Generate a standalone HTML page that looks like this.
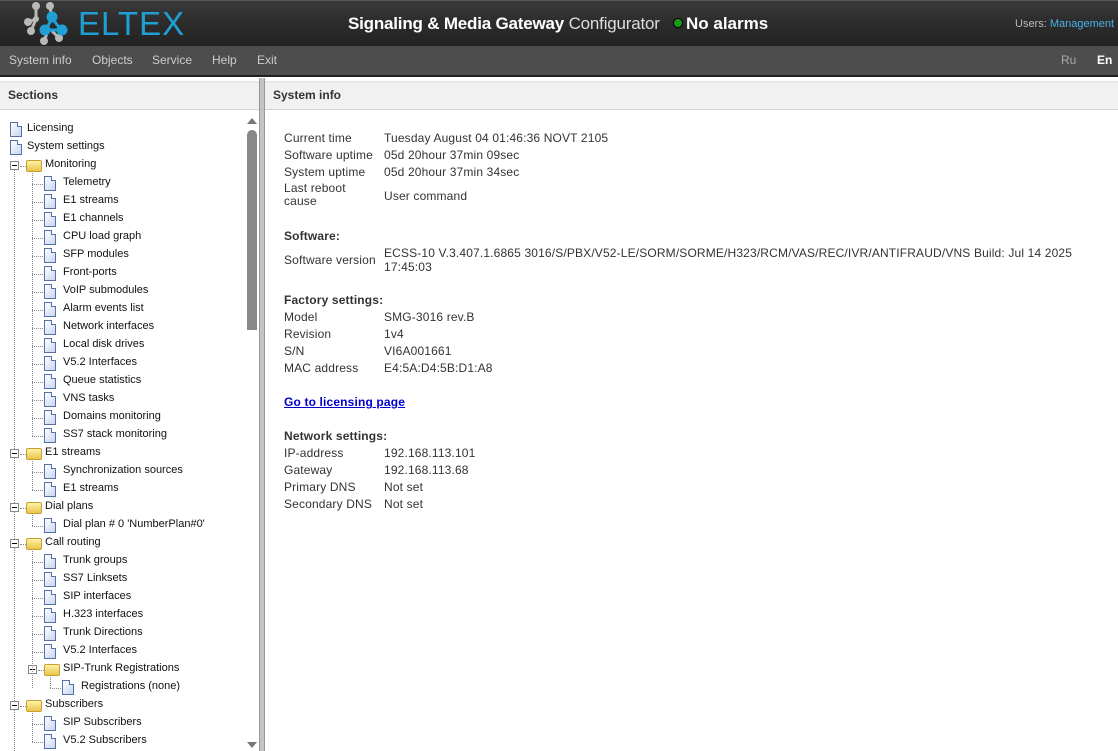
<!DOCTYPE html>
<html><head><meta charset="utf-8"><style>
*{margin:0;padding:0;box-sizing:border-box}
body{width:1118px;height:751px;overflow:hidden;background:#fff;font-family:"Liberation Sans",Tahoma,sans-serif;position:relative}
.hdr{position:absolute;left:0;top:0;width:1118px;height:46px;background:linear-gradient(#3a3a3a,#2e2e2e 40%,#222);border-top:1px solid #555}
.menu{position:absolute;left:0;top:46px;width:1118px;height:31px;background:#4d4d4d;border-bottom:2px solid #222}
.menu span{position:absolute;top:7px;font-size:12px;color:#ccc}
.ph{position:absolute;top:81px;height:29px;background:#f1f1f1;border-top:2px solid #e8e8e8;border-bottom:1px solid #d4d4d4;font-size:12px;font-weight:bold;color:#333;padding:5px 0 0 8px}
.split{position:absolute;left:259px;top:78px;width:6px;height:673px;background:#c4c4c4;border-left:1px solid #999;border-right:1px solid #999}
.t{position:absolute;font-size:11px;color:#111;white-space:nowrap}
.doc{position:absolute;width:12px;height:15px;border:1px solid #5570a8;background:linear-gradient(135deg,#fff,#c8d6f0)}
.doc:after{content:"";position:absolute;right:-1px;top:-1px;width:4px;height:4px;background:#fff;border-left:1px solid #5570a8;border-bottom:1px solid #5570a8}
.fold{position:absolute;width:16px;height:12px;background:linear-gradient(#fff2a8,#e9c44a);border:1px solid #c9a030;border-radius:2px}
.tog{position:absolute;width:9px;height:9px;border:1px solid #888;background:#fff}
.tog:after{content:"";position:absolute;left:1px;top:3px;width:5px;height:1px;background:#000}
.hl{position:absolute;border-top:1px dotted #888;height:1px}
.vl{position:absolute;border-left:1px dotted #888;width:1px}
.r{position:absolute;font-size:12px;color:#333;white-space:nowrap;letter-spacing:0.15px}
.b{font-weight:bold}
</style></head><body>
<div class="hdr">
<svg style="position:absolute;left:22px;top:0" width="60" height="46" viewBox="0 0 60 46">
<g fill="#b9b9b9"><circle cx="14" cy="5" r="4"/><circle cx="6" cy="21" r="4"/><circle cx="9" cy="30" r="4"/><circle cx="28" cy="5" r="4"/><circle cx="37" cy="37" r="4"/><circle cx="22" cy="40" r="4"/><circle cx="14" cy="18" r="3"/></g>
<g stroke="#b9b9b9" stroke-width="3"><line x1="14" y1="5" x2="14" y2="18"/><line x1="6" y1="21" x2="14" y2="18"/><line x1="9" y1="30" x2="14" y2="18"/><line x1="28" y1="5" x2="30" y2="18"/><line x1="37" y1="37" x2="30" y2="30"/><line x1="22" y1="40" x2="26" y2="30"/></g>
<g stroke="#1ea0d4" stroke-width="3" fill="#1ea0d4"><line x1="30" y1="17" x2="24" y2="29"/><line x1="24" y1="29" x2="39" y2="29"/><line x1="30" y1="17" x2="39" y2="29"/><circle cx="30" cy="16" r="4"/><circle cx="23" cy="29" r="4"/><circle cx="40" cy="29" r="4"/></g>
</svg>
<div style="position:absolute;left:78px;top:4px;font-size:33px;color:#1ea0d4;letter-spacing:1px;font-family:'Liberation Sans',sans-serif">ELTEX</div>
<div style="position:absolute;left:348px;top:13px;font-size:17px;color:#fff;white-space:nowrap;letter-spacing:-0.2px"><b>Signaling &amp; Media Gateway</b> <span style="color:#ddd">Configurator</span></div>
<div style="position:absolute;left:673px;top:17px;width:10px;height:10px;border-radius:50%;background:#1a9a1a;border:1px solid #000"></div>
<div style="position:absolute;left:686px;top:13px;font-size:17px;color:#fff;font-weight:bold">No alarms</div>
<div style="position:absolute;left:1015px;top:17px;font-size:11px;color:#bbb">Users: <span style="color:#4ab0e8">Management</span></div>
</div>
<div class="menu">
<span style="left:9px">System info</span><span style="left:92px">Objects</span><span style="left:152px">Service</span><span style="left:212px">Help</span><span style="left:257px">Exit</span>
<span style="left:1061px;color:#aaa">Ru</span><span style="left:1097px;color:#fff;font-weight:bold">En</span>
</div>
<div class="ph" style="left:0;width:259px">Sections</div>
<div class="ph" style="left:265px;width:853px">System info</div>
<div class="split"></div>
<div style="position:absolute;left:247px;top:130px;width:10px;height:200px;background:#888;border-radius:5px 5px 0 0"></div>
<div style="position:absolute;left:247px;top:118px;width:0;height:0;border-left:5px solid transparent;border-right:5px solid transparent;border-bottom:6px solid #777"></div>
<div style="position:absolute;left:247px;top:742px;width:0;height:0;border-left:5px solid transparent;border-right:5px solid transparent;border-top:6px solid #777"></div>
<div id="tree"></div>
<script>
var rows=[[0,'d','Licensing'],[0,'d','System settings'],[0,'f','Monitoring'],
[1,'d','Telemetry'],[1,'d','E1 streams'],[1,'d','E1 channels'],[1,'d','CPU load graph'],[1,'d','SFP modules'],[1,'d','Front-ports'],[1,'d','VoIP submodules'],[1,'d','Alarm events list'],[1,'d','Network interfaces'],[1,'d','Local disk drives'],[1,'d','V5.2 Interfaces'],[1,'d','Queue statistics'],[1,'d','VNS tasks'],[1,'d','Domains monitoring'],[1,'d','SS7 stack monitoring'],
[0,'f','E1 streams'],[1,'d','Synchronization sources'],[1,'d','E1 streams'],
[0,'f','Dial plans'],[1,'d',"Dial plan # 0 'NumberPlan#0'"],
[0,'f','Call routing'],[1,'d','Trunk groups'],[1,'d','SS7 Linksets'],[1,'d','SIP interfaces'],[1,'d','H.323 interfaces'],[1,'d','Trunk Directions'],[1,'d','V5.2 Interfaces'],[1,'f','SIP-Trunk Registrations'],[2,'d','Registrations (none)'],
[0,'f','Subscribers'],[1,'d','SIP Subscribers'],[1,'d','V5.2 Subscribers']];
var h='';
h+='<div class="vl" style="left:14px;top:170px;height:581px"></div>';
rows.forEach(function(r,i){var y=121+i*18,l=r[0];
 if(r[1]=='d'){var x=l==0?10:(l==1?44:62);h+='<div class="doc" style="left:'+x+'px;top:'+(y+1)+'px"></div>';
  if(l>0)h+='<div class="hl" style="left:'+(l==1?32:50)+'px;top:'+(y+9)+'px;width:11px"></div>';
  h+='<div class="t" style="left:'+(x+(l==0?17:19))+'px;top:'+(y+1)+'px">'+r[2]+'</div>';}
 else{var tx=l==0?10:28,fx=l==0?26:44;h+='<div class="tog" style="left:'+tx+'px;top:'+(y+4)+'px"></div><div class="hl" style="left:'+(tx+10)+'px;top:'+(y+9)+'px;width:6px"></div><div class="fold" style="left:'+fx+'px;top:'+(y+3)+'px"></div><div class="t" style="left:'+(fx+19)+'px;top:'+(y+1)+'px">'+r[2]+'</div>';}
});
[[2,17,32],[18,20,32],[21,22,32],[23,31,32],[30,31,50],[32,34,32]].forEach(function(a){var y1=121+a[0]*18+16,y2=121+a[1]*18+9;h+='<div class="vl" style="left:'+a[2]+'px;top:'+y1+'px;height:'+(y2-y1)+'px"></div>';});
document.getElementById('tree').innerHTML=h;
</script>
<div class="r" style="left:284px;top:131px">Current time</div><div class="r" style="left:384px;top:131px">Tuesday August 04 01:46:36 NOVT 2105</div>
<div class="r" style="left:284px;top:148px">Software uptime</div><div class="r" style="left:384px;top:148px">05d 20hour 37min 09sec</div>
<div class="r" style="left:284px;top:165px">System uptime</div><div class="r" style="left:384px;top:165px">05d 20hour 37min 34sec</div>
<div class="r" style="left:284px;top:182px;line-height:13px">Last reboot<br>cause</div><div class="r" style="left:384px;top:189px">User command</div>
<div class="r b" style="left:284px;top:229px">Software:</div>
<div class="r" style="left:284px;top:253px">Software version</div><div class="r" style="left:384px;top:246px;line-height:14px">ECSS-10 V.3.407.1.6865 3016/S/PBX/V52-LE/SORM/SORME/H323/RCM/VAS/REC/IVR/ANTIFRAUD/VNS Build: Jul 14 2025<br>17:45:03</div>
<div class="r b" style="left:284px;top:293px">Factory settings:</div>
<div class="r" style="left:284px;top:310px">Model</div><div class="r" style="left:384px;top:310px">SMG-3016 rev.B</div>
<div class="r" style="left:284px;top:327px">Revision</div><div class="r" style="left:384px;top:327px">1v4</div>
<div class="r" style="left:284px;top:344px">S/N</div><div class="r" style="left:384px;top:344px">VI6A001661</div>
<div class="r" style="left:284px;top:361px">MAC address</div><div class="r" style="left:384px;top:361px">E4:5A:D4:5B:D1:A8</div>
<div class="r b" style="left:284px;top:395px;color:#00c;text-decoration:underline">Go to licensing page</div>
<div class="r b" style="left:284px;top:429px">Network settings:</div>
<div class="r" style="left:284px;top:446px">IP-address</div><div class="r" style="left:384px;top:446px">192.168.113.101</div>
<div class="r" style="left:284px;top:463px">Gateway</div><div class="r" style="left:384px;top:463px">192.168.113.68</div>
<div class="r" style="left:284px;top:480px">Primary DNS</div><div class="r" style="left:384px;top:480px">Not set</div>
<div class="r" style="left:284px;top:497px">Secondary DNS</div><div class="r" style="left:384px;top:497px">Not set</div>
</body></html>
